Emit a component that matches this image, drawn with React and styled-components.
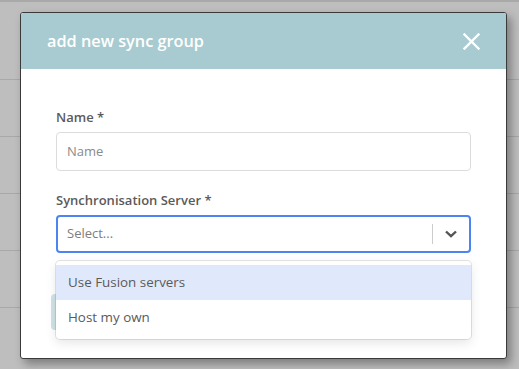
import React from 'react';
import styled, { createGlobalStyle } from 'styled-components';

const GlobalStyle = createGlobalStyle`
  html, body {
    margin: 0;
    padding: 0;
    width: 519px;
    height: 369px;
    overflow: hidden;
    background: #bdbdbd;
    font-family: "Open Sans", "Liberation Sans", sans-serif;
  }
`;

const Page = styled.div`
  position: relative;
  width: 519px;
  height: 369px;
  background: #bebebe;
  border-top: 2px solid #a9a9a9;
  box-sizing: border-box;
`;

const BgTable = styled.div`
  display: flex;
  flex-direction: column;
  padding-top: 77px;
`;

const BgRow = styled.div`
  height: 56px;
  border-top: 1px solid #a8a8a8;
`;

const Overlay = styled.div`
  position: absolute;
  left: 20px;
  top: 10px;
  width: 487px;
  height: 347px;
`;

const Modal = styled.div`
  display: flex;
  flex-direction: column;
  width: 100%;
  height: 100%;
  box-sizing: border-box;
  border: 1px solid #3a3a3a;
  border-radius: 3px;
  background: #fff;
  overflow: hidden;
  box-shadow: 4px 5px 10px rgba(0, 0, 0, 0.35);
`;

const Header = styled.div`
  display: flex;
  align-items: center;
  justify-content: space-between;
  height: 56px;
  padding: 0 24px 0 26px;
  background: #a7cbd0;
  flex-shrink: 0;
`;

const Title = styled.h2`
  margin: 0;
  font-size: 16.3px;
  font-weight: 600;
  color: #fff;
`;

const CloseBtn = styled.button`
  display: flex;
  align-items: center;
  justify-content: center;
  width: 22px;
  height: 22px;
  padding: 0;
  border: none;
  background: none;
  cursor: pointer;
`;

const Body = styled.div`
  position: relative;
  display: flex;
  flex-direction: column;
  padding: 39px 35px 0 35px;
`;

const Field = styled.div`
  display: flex;
  flex-direction: column;
  gap: 6px;
  margin-bottom: ${p => p.$gap || 0}px;
`;

const Label = styled.label`
  font-size: 13px;
  font-weight: 600;
  color: #5a5a5a;
  line-height: 18px;
`;

const Input = styled.input`
  box-sizing: border-box;
  width: 415px;
  height: 39px;
  padding: 0 10px 2px;
  border: 1px solid #dcdcdc;
  border-radius: 4px;
  font-family: inherit;
  font-size: 13px;
  color: #333;
  outline: none;
  &::placeholder {
    color: #8a8a8a;
  }
`;

const SelectBox = styled.div`
  box-sizing: border-box;
  display: flex;
  align-items: center;
  width: 415px;
  height: 38px;
  border: 2px solid #4c84f2;
  border-radius: 4px;
`;

const SelectValue = styled.div`
  flex: 1;
  padding-left: 9px;
  padding-bottom: 2px;
  font-size: 13px;
  color: #7d7d7d;
`;

const Separator = styled.span`
  width: 1px;
  height: 20px;
  background: #cccccc;
`;

const Indicator = styled.div`
  display: flex;
  align-items: center;
  justify-content: center;
  width: 36px;
  height: 100%;
`;

const Footer = styled.div`
  display: flex;
  margin-top: 41px;
  margin-left: -5px;
`;

const SaveButton = styled.button`
  width: 90px;
  height: 36px;
  border: none;
  border-radius: 4px;
  background: #d1e3e6;
`;

const Menu = styled.div`
  position: absolute;
  left: 35px;
  top: 192px;
  width: 415px;
  box-sizing: border-box;
  padding: 4px 0;
  background: #fff;
  border-radius: 4px;
  box-shadow: 0 0 0 1px rgba(0, 0, 0, 0.1), 0 4px 11px rgba(0, 0, 0, 0.1);
`;

const Option = styled.div`
  height: 35px;
  display: flex;
  align-items: center;
  padding-left: 12px;
  padding-bottom: 1px;
  box-sizing: border-box;
  font-size: 13.4px;
  color: #5a5a5a;
  background: ${p => (p.$focused ? '#e0e9fb' : '#fff')};
`;

function App() {
  const rows = [0, 1, 2, 3, 4];
  const options = ['Use Fusion servers', 'Host my own'];

  return (
    <Page>
      <GlobalStyle />
      <BgTable>
        {rows.map(r => <BgRow key={`row-${r}`} />)}
      </BgTable>
      <Overlay>
        <Modal>
          <Header>
            <Title>add new sync group</Title>
            <CloseBtn aria-label="close">
              <svg width="17" height="17" viewBox="0 0 17 17">
                <path d="M1.5 1.5 L15.5 15.5 M15.5 1.5 L1.5 15.5" stroke="#fff" strokeWidth="2.4" strokeLinecap="square" />
              </svg>
            </CloseBtn>
          </Header>
          <Body>
            <Field $gap={20}>
              <Label>Name *</Label>
              <Input placeholder="Name" />
            </Field>
            <Field>
              <Label>Synchronisation Server *</Label>
              <SelectBox>
                <SelectValue>Select...</SelectValue>
                <Separator />
                <Indicator>
                  <svg width="14" height="10" viewBox="0 0 14 10">
                    <path d="M2 2.5 L7 7.2 L12 2.5" fill="none" stroke="#555" strokeWidth="2.4" />
                  </svg>
                </Indicator>
              </SelectBox>
            </Field>
            <Footer>
              <SaveButton />
            </Footer>
            <Menu>
              {options.map((o, ix) => (
                <Option key={`opt-${ix}`} $focused={ix === 0}>{o}</Option>
              ))}
            </Menu>
          </Body>
        </Modal>
      </Overlay>
    </Page>
  );
}

export default App;
